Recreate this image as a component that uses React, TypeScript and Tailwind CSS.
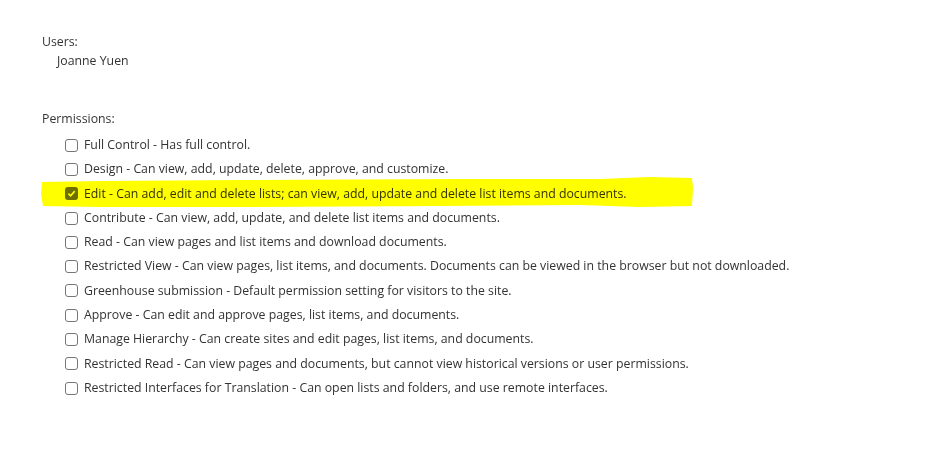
import React from "react";

const permissions = [
  { name: "Full Control", desc: "Has full control." },
  { name: "Design", desc: "Can view, add, update, delete, approve, and customize." },
  { name: "Edit", desc: "Can add, edit and delete lists; can view, add, update and delete list items and documents.", checked: true },
  { name: "Contribute", desc: "Can view, add, update, and delete list items and documents." },
  { name: "Read", desc: "Can view pages and list items and download documents." },
  { name: "Restricted View", desc: "Can view pages, list items, and documents. Documents can be viewed in the browser but not downloaded." },
  { name: "Greenhouse submission", desc: "Default permission setting for visitors to the site." },
  { name: "Approve", desc: "Can edit and approve pages, list items, and documents." },
  { name: "Manage Hierarchy", desc: "Can create sites and edit pages, list items, and documents." },
  { name: "Restricted Read", desc: "Can view pages and documents, but cannot view historical versions or user permissions." },
  { name: "Restricted Interfaces for Translation", desc: "Can open lists and folders, and use remote interfaces." },
];

function Box({ checked }: { checked?: boolean }) {
  if (checked) {
    return (
      <span className="flex h-[13px] w-[13px] items-center justify-center rounded-[3px] bg-[#6f6f6f]">
        <svg width="9" height="9" viewBox="0 0 10 10">
          <path d="M1.5 5.2 L4 7.6 L8.6 2.4" fill="none" stroke="#fff" strokeWidth="1.8" />
        </svg>
      </span>
    );
  }
  return <span className="h-[13px] w-[13px] rounded-[3px] border border-[#767676] bg-white" />;
}

export default function App() {
  return (
    <div className="relative h-[463px] w-[930px] bg-white pl-[42px] pt-[32px] text-[12.3px] text-[#333] [font-family:'Open_Sans',sans-serif]">
      <div className="leading-[19px]">Users:</div>
      <div className="pl-[15px] leading-[19px]">Joanne Yuen</div>

      <div className="mt-[39px] leading-[19px]">Permissions:</div>
      <div className="mt-[5px] flex flex-col pl-[23px]">
        {permissions.map((p) => (
          <div key={p.name} className="flex h-[24.3px] items-center gap-[6px]">
            <Box checked={p.checked} />
            <span className="whitespace-nowrap">
              {p.name} - {p.desc}
            </span>
          </div>
        ))}
      </div>

      {/* highlighter stroke over the Edit row */}
      <svg className="pointer-events-none absolute left-[40px] top-[176px] mix-blend-multiply" width="656" height="34" viewBox="0 0 656 34">
        <path
          d="M2 6 L60 5 L200 4 L420 3 L560 3 L610 1 L652 2 L653 12 L652 30 L600 31 L540 29 L400 30 L200 31 L60 31 L3 30 L1 18 Z"
          fill="#ffff00"
        />
      </svg>
    </div>
  );
}
